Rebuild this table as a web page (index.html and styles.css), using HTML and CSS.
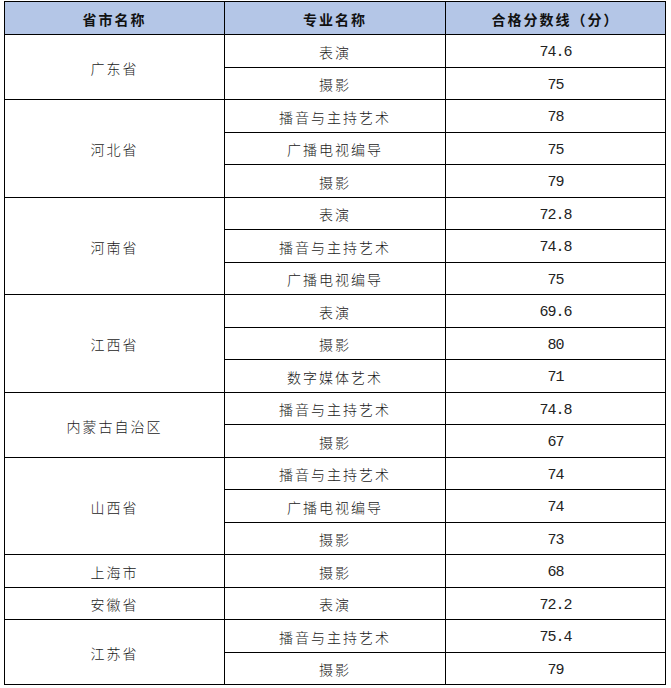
FILE: index.html
```html
<!DOCTYPE html>
<html lang="zh-CN">
<head>
<meta charset="utf-8">
<title>合格分数线</title>
<link rel="stylesheet" href="styles.css">
</head>
<body>
<table class="score-table">
  <colgroup>
    <col class="c1"><col class="c2"><col class="c3">
  </colgroup>
  <thead>
    <tr><th>省市名称</th><th>专业名称</th><th>合格分数线（分）</th></tr>
  </thead>
  <tbody>
    <tr><td rowspan="2">广东省</td><td>表演</td><td class="num">74.6</td></tr>
    <tr><td>摄影</td><td class="num">75</td></tr>
    <tr><td rowspan="3">河北省</td><td>播音与主持艺术</td><td class="num">78</td></tr>
    <tr><td>广播电视编导</td><td class="num">75</td></tr>
    <tr><td>摄影</td><td class="num">79</td></tr>
    <tr><td rowspan="3">河南省</td><td>表演</td><td class="num">72.8</td></tr>
    <tr><td>播音与主持艺术</td><td class="num">74.8</td></tr>
    <tr><td>广播电视编导</td><td class="num">75</td></tr>
    <tr><td rowspan="3">江西省</td><td>表演</td><td class="num">69.6</td></tr>
    <tr><td>摄影</td><td class="num">80</td></tr>
    <tr><td>数字媒体艺术</td><td class="num">71</td></tr>
    <tr><td rowspan="2">内蒙古自治区</td><td>播音与主持艺术</td><td class="num">74.8</td></tr>
    <tr><td>摄影</td><td class="num">67</td></tr>
    <tr><td rowspan="3">山西省</td><td>播音与主持艺术</td><td class="num">74</td></tr>
    <tr><td>广播电视编导</td><td class="num">74</td></tr>
    <tr><td>摄影</td><td class="num">73</td></tr>
    <tr><td>上海市</td><td>摄影</td><td class="num">68</td></tr>
    <tr><td>安徽省</td><td>表演</td><td class="num">72.2</td></tr>
    <tr><td rowspan="2">江苏省</td><td>播音与主持艺术</td><td class="num">75.4</td></tr>
    <tr><td>摄影</td><td class="num">79</td></tr>
  </tbody>
</table>
</body>
</html>
```

FILE: styles.css
```css
html, body {
  margin: 0;
  padding: 0;
  background: #ffffff;
}
body {
  padding: 1px 0 0 4px;
}
.score-table {
  border-collapse: collapse;
  table-layout: fixed;
  width: 661px;
  font-family: "Noto Sans CJK SC", "Noto Sans", sans-serif;
  font-size: 14px;
  color: #1a1a1a;
}
.c1 { width: 220px; }
.c2 { width: 221px; }
.c3 { width: 220px; }
.score-table thead tr { height: 33px; }
.score-table tbody tr { height: 32.5px; }
.score-table th,
.score-table td {
  border: 1px solid #000;
  text-align: center;
  vertical-align: middle;
  padding: 2px 0 0 0;
  letter-spacing: 2px;
  line-height: 16px;
}
.score-table th {
  background: #b4c6e7;
  font-weight: 700;
  color: #111;
}
.score-table td {
  font-weight: 300;
}
.score-table td.num {
  font-family: "Liberation Mono", "DejaVu Sans Mono", monospace;
  font-size: 15px;
  letter-spacing: -1px;
  padding-top: 5px;
  font-weight: 400;
  color: #222;
}
```
